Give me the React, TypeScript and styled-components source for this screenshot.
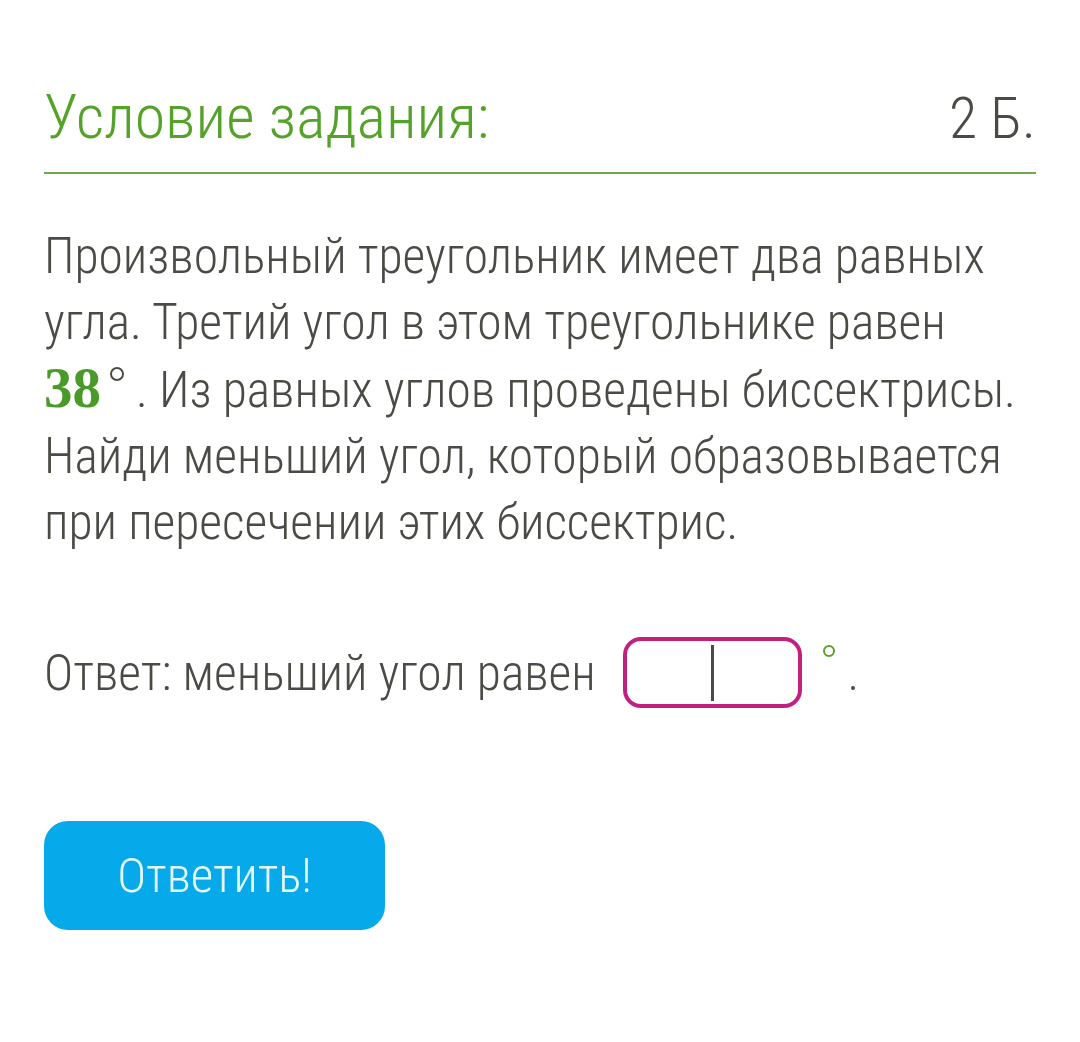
import React from "react";
import styled, { createGlobalStyle } from "styled-components";

const Global = createGlobalStyle`
  html, body { margin: 0; padding: 0; background: #ffffff; }
  body {
    font-family: Roboto, "Liberation Sans", sans-serif;
    font-weight: 300;
    font-stretch: 75%;
    color: #4b4b45;
  }
`;

const Page = styled.div`
  padding: 80px 44px 0 44px;
`;

const Header = styled.div`
  display: flex;
  justify-content: space-between;
  align-items: baseline;
  padding-bottom: 18px;
  border-bottom: 2px solid #6aaa4a;
`;

const Title = styled.h1`
  margin: 0;
  font-size: 62px;
  font-weight: 300;
  font-stretch: 75%;
  color: #55a22a;
  line-height: 74px;
`;

const Points = styled.span`
  font-size: 58px;
  font-weight: 300;
  color: #4b4b45;
`;

const Text = styled.p`
  margin: 49px 0 0 0;
  font-size: 49.5px;
  line-height: 66px;
`;

const NoWrap = styled.span`
  white-space: nowrap;
`;

const MathNum = styled.span`
  font-family: "Liberation Serif", "DejaVu Serif", serif;
  font-stretch: 100%;
  font-weight: 700;
  color: #4a9a2a;
  font-size: 57px;
`;

const Deg = styled.span`
  display: inline-block;
  width: 10px;
  height: 10px;
  border: 2px solid #4b4b45;
  border-radius: 50%;
  margin: 0 12px 0 9px;
  vertical-align: 26px;
`;

const AnswerRow = styled.div`
  display: flex;
  align-items: center;
  margin-top: 82px;
  font-size: 49.5px;
`;

const Input = styled.div`
  width: 171px;
  height: 63px;
  margin-left: 27px;
  border: 4px solid #c1207f;
  border-radius: 18px;
  display: flex;
  align-items: center;
  justify-content: center;
`;

const Caret = styled.div`
  width: 3px;
  height: 56px;
  background: #4b4b45;
`;

const AnsDeg = styled.span`
  align-self: flex-start;
  width: 8px;
  height: 8px;
  border: 2px solid #5aa02c;
  border-radius: 50%;
  margin: 8px 0 0 21px;
`;

const Dot = styled.span`
  align-self: flex-end;
  width: 4px;
  height: 4px;
  border-radius: 50%;
  background: #4b4b45;
  margin: 0 0 18px 16px;
`;

const Button = styled.button`
  margin-top: 113px;
  width: 341px;
  height: 109px;
  border: none;
  border-radius: 24px;
  background: #06aaeb;
  color: #e6f8ff;
  font-family: Roboto, "Liberation Sans", sans-serif;
  font-weight: 300;
  font-stretch: 75%;
  font-size: 49px;
  display: flex;
  align-items: center;
  justify-content: center;
  padding: 0;
`;

export default function App() {
  return (
    <>
      <Global />
      <Page>
        <Header>
          <Title>Условие задания:</Title>
          <Points>2 Б.</Points>
        </Header>
        <Text>
          Произвольный треугольник имеет два равных угла. Третий угол в этом треугольнике равен{" "}
          <NoWrap>
            <MathNum>38</MathNum>
            <Deg />.
          </NoWrap>{" "}
          Из равных углов проведены биссектрисы. Найди меньший угол, который образовывается при
          пересечении этих биссектрис.
        </Text>
        <AnswerRow>
          <span>Ответ: меньший угол равен</span>
          <Input>
            <Caret />
          </Input>
          <AnsDeg />
          <Dot />
        </AnswerRow>
        <Button>Ответить!</Button>
      </Page>
    </>
  );
}
